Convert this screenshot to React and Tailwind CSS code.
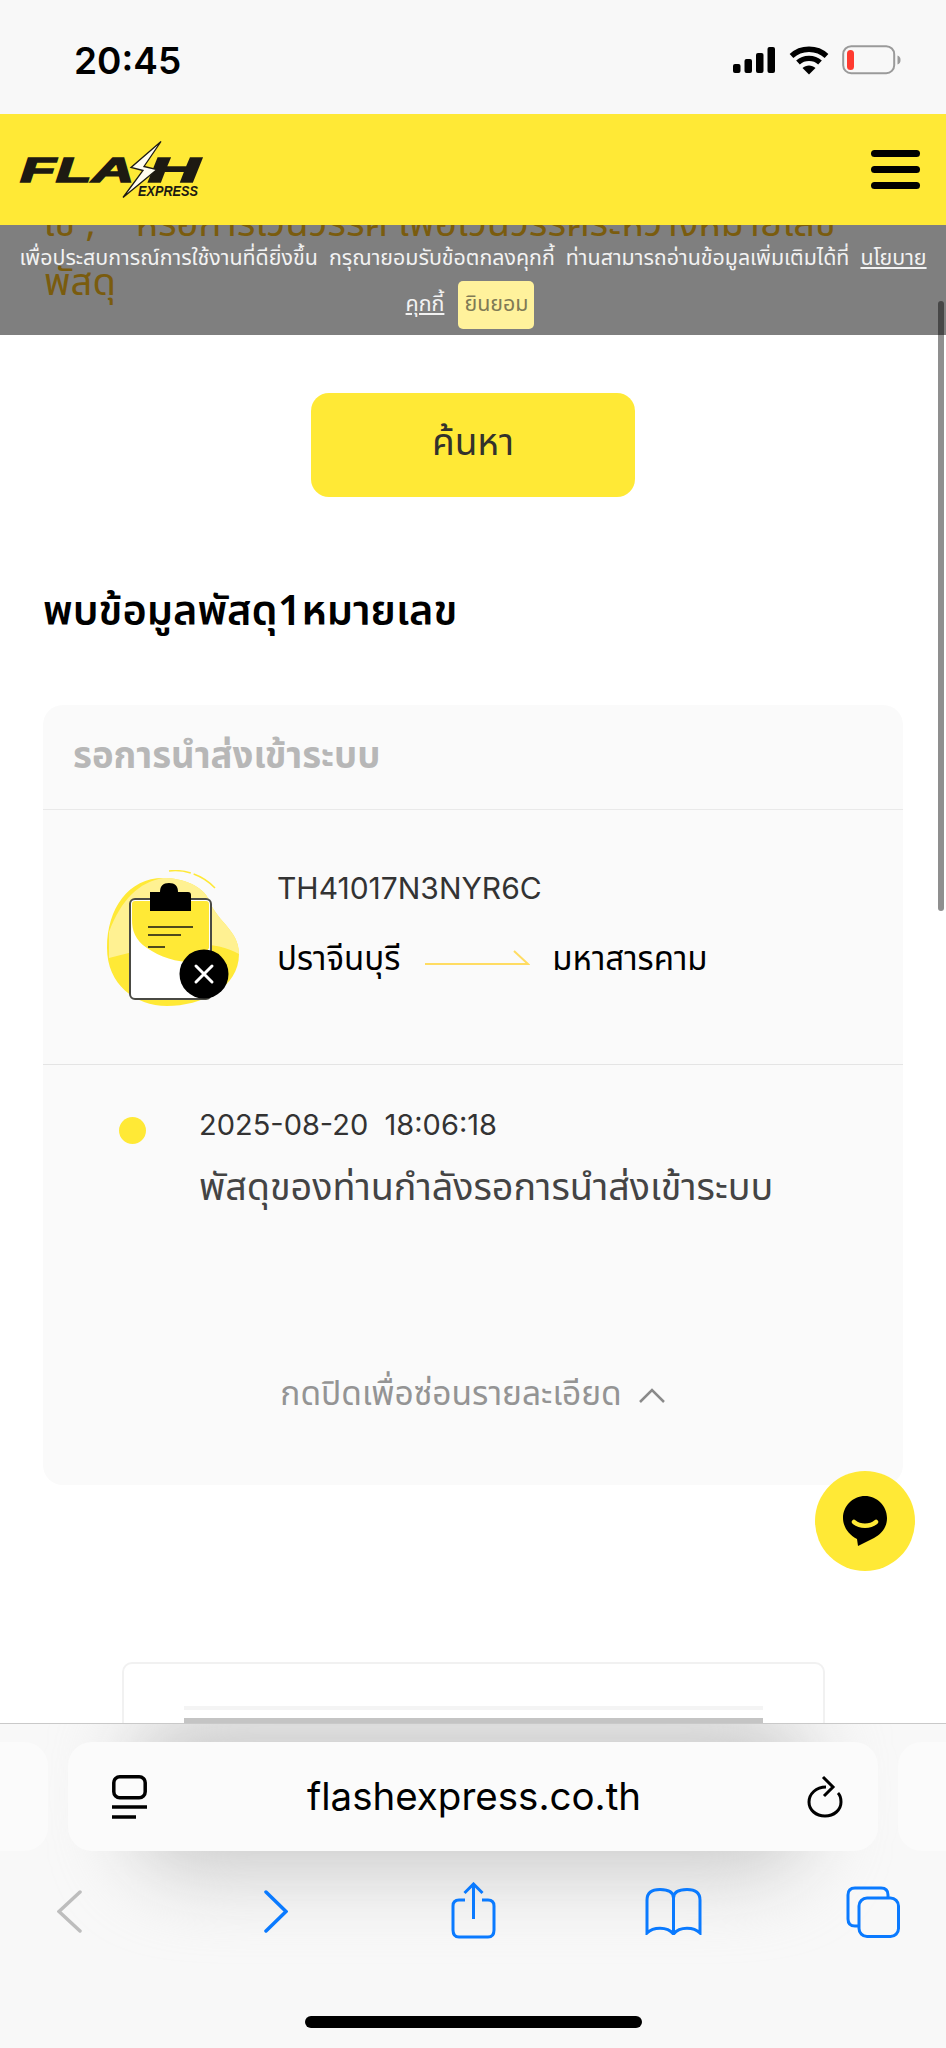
import React from "react";

const thai = "font-['Noto_Sans_Thai','Noto_Sans_Thai_Looped','Noto_Sans','DejaVu_Sans','Liberation_Sans',sans-serif]";

function Signal() {
  return (
    <svg width="43" height="26" viewBox="0 0 43 26" fill="black">
      <rect x="0" y="17" width="7.500" height="9" rx="2" />
      <rect x="11.500" y="12" width="7.500" height="14" rx="2" />
      <rect x="23" y="6" width="7.500" height="20" rx="2" />
      <rect x="34.500" y="0" width="7.500" height="26" rx="2" />
    </svg>
  );
}

function Wifi() {
  return (
    <svg width="40" height="30" viewBox="0 0 40 30" fill="none" stroke="black" strokeWidth="5.400">
      <path d="M2.500 11C12 2 28 2 37.500 11" />
      <path d="M9 17.500C15 12 25 12 31 17.500" />
      <path d="M20 29.500L13.500 23C17 19.500 23 19.500 26.500 23Z" fill="black" stroke="none" />
    </svg>
  );
}

function Battery() {
  return (
    <svg width="60" height="30" viewBox="0 0 60 30" fill="none">
      <rect x="1.200" y="1.200" width="51" height="27" rx="8" stroke="#9a9a9a" strokeWidth="2" />
      <rect x="5" y="5" width="7" height="20" rx="3.500" fill="#ff3b30" />
      <path d="M55.500 10.500C58 11.500 58.500 13 58.500 15C58.500 17 58 18.500 55.500 19.500Z" fill="#9a9a9a" />
    </svg>
  );
}

function Logo() {
  return (
    <svg width="204" height="64" viewBox="0 0 204 64">
      <text x="18" y="43.500" fontFamily="Liberation Sans" fontWeight="700" fontStyle="italic" fontSize="35" textLength="114" lengthAdjust="spacingAndGlyphs" fill="#1d1a12" stroke="#1d1a12" strokeWidth="1.500">FLA</text>
      <text x="146" y="43.500" fontFamily="Liberation Sans" fontWeight="700" fontStyle="italic" fontSize="35" textLength="52" lengthAdjust="spacingAndGlyphs" fill="#1d1a12" stroke="#1d1a12" strokeWidth="1.500">H</text>
      <path d="M159 3.500L129 29.500L141 32.500L121 59.500L155 31.500L142 28.500Z" fill="#fffdf0" stroke="#1d1a12" strokeWidth="1.300" strokeLinejoin="miter" />
      <text x="136" y="57.500" fontFamily="Liberation Sans" fontWeight="700" fontStyle="italic" fontSize="15" textLength="60" lengthAdjust="spacingAndGlyphs" fill="#1d1a12">EXPRESS</text>
    </svg>
  );
}

function Clipboard() {
  return (
    <svg width="136" height="140" viewBox="0 0 136 140" className="block">
      <path d="M58 8C24 8 2 38 2 78C2 114 30 136 62 136C96 136 134 118 134 84C134 60 112 52 104 30C98 16 78 8 58 8Z" fill="#ffe936" />
      <path d="M4 62C16 30 34 12 58 8C78 8 98 16 104 30C112 52 134 60 134 84C110 70 70 70 4 88Z" fill="#fff29c" opacity="0.900" />
      <path d="M64 1C80 -1 98 5 110 18" fill="none" stroke="#ffe936" strokeWidth="1.500" strokeDasharray="22 3 30" />
      <rect x="25" y="29" width="81" height="100" rx="5" fill="#ffffff" stroke="#4a4a44" strokeWidth="2" />
      <path d="M27 34Q27 31 30 31H101Q104 31 104 34V78L94 92C78 94 56 88 42 78C30 70 27 60 27 50Z" fill="#ffe936" />
      <path d="M45 22H55C55 16 58 13 64 13C70 13 73 16 73 22H83Q86 22 86 25V41H45Z" fill="#000" />
      <path d="M43 57H88M43 65H76M43 77H60" stroke="#4f4a1c" strokeWidth="2" />
      <circle cx="99" cy="104" r="24.500" fill="#000" />
      <path d="M91 96L107 112M107 96L91 112" stroke="#fff" strokeWidth="3" strokeLinecap="round" />
    </svg>
  );
}

function Chat() {
  return (
    <svg width="46" height="52" viewBox="0 0 46 52">
      <path d="M23 1C35 1 45 11 45 23C45 33 39 39 32 43L16 51L15 44C7 40 1 32 1 23C1 11 11 1 23 1Z" fill="#000" />
      <path d="M12 27C18 32 28 32 34 27" fill="none" stroke="#ffe936" strokeWidth="4.500" strokeLinecap="round" />
    </svg>
  );
}

const blue = "#0a7aff";

export default function App() {
  return (
    <div className={`relative flex flex-col w-[946px] h-[2048px] overflow-hidden bg-white ${thai}`}>
      <div className="relative z-20 flex items-center justify-between h-[114px] shrink-0 bg-[#f8f8f8] pl-[74px] pr-[44px] pt-[6px]">
        <span className="font-['Inter',sans-serif] text-[37px] font-semibold text-black leading-none">20:45</span>
        <div className="flex items-center gap-[13px]">
          <Signal />
          <Wifi />
          <Battery />
        </div>
      </div>

      <header className="relative z-20 flex items-center justify-between h-[111px] shrink-0 bg-[#ffe936] pl-[2px] pr-[26px]">
        <Logo />
        <div className="flex flex-col gap-[9px]">
          <div className="w-[49px] h-[7px] rounded-full bg-black" />
          <div className="w-[49px] h-[7px] rounded-full bg-black" />
          <div className="w-[49px] h-[7px] rounded-full bg-black" />
        </div>
      </header>

      <main className="relative flex-1 min-h-0 overflow-hidden">
        <div className="mt-[-30px] px-[44px] text-[38.200px] leading-[59px] whitespace-nowrap text-[#f5b81c]">
          <p>ใช้ ,&nbsp;&nbsp;&nbsp;&nbsp;หรือการเว้นวรรค เพื่อเว้นวรรคระหว่างหมายเลข</p>
          <p>พัสดุ</p>
        </div>

        <button className="block mt-[80px] ml-[311px] w-[324px] h-[104px] rounded-[18px] bg-[#ffe936] text-[37px] text-[#33322c]">ค้นหา</button>

        <h2 className="mt-[91px] pl-[43px] text-[41.500px] font-semibold leading-[50px] text-black">พบข้อมูลพัสดุ1หมายเลข</h2>

        <section className="mx-[43px] mt-[67px] h-[780px] rounded-[20px] bg-[#fafafa]">
          <div className="flex items-center h-[105px] border-b border-[#e9e9e9] pl-[30px] text-[36.500px] font-bold text-[#b7b7b7]">รอการนำส่งเข้าระบบ</div>

          <div className="flex h-[255px] border-b border-[#e4e4e4] pl-[62px] pt-[60px]">
            <Clipboard />
            <div className="ml-[36px] -mt-[2px]">
              <div className="font-['Inter',sans-serif] text-[30px] leading-[40px] text-[#333]">TH41017N3NYR6C</div>
              <div className="mt-[34px] flex items-center text-[33px] leading-[36px] text-black">
                <span>ปราจีนบุรี</span>
                <svg width="106" height="22" viewBox="0 0 106 22" className="ml-[24px] mr-[22px]" fill="none" stroke="#ffdc62" strokeWidth="2">
                  <path d="M1 15H104L90 2" />
                </svg>
                <span>มหาสารคาม</span>
              </div>
            </div>
          </div>

          <div className="relative pl-[156px] pt-[42px]">
            <div className="absolute left-[76px] top-[52px] w-[27px] h-[27px] rounded-full bg-[#ffe936]" />
            <div className="font-['Inter',sans-serif] text-[29px] leading-[36px] text-[#333]">2025-08-20&nbsp;&nbsp;18:06:18</div>
            <div className="mt-[25px] text-[37.700px] leading-[42px] text-[#444]">พัสดุของท่านกำลังรอการนำส่งเข้าระบบ</div>
          </div>

          <div className="mt-[167px] flex items-center justify-center gap-[16px] text-[33.500px] leading-[36px] text-[#949494]">
            <span>กดปิดเพื่อซ่อนรายละเอียด</span>
            <svg width="28" height="16" viewBox="0 0 28 16" fill="none" stroke="#8a8a8a" strokeWidth="2.500"><path d="M2 15L14 3L26 15" /></svg>
          </div>
        </section>

        <div className="mt-[177px] ml-[122px] w-[703px] h-[200px] rounded-[10px] border-2 border-[#f1f1f1] bg-white">
          <div className="mx-[60px] mt-[42px] h-[4px] bg-[#f4f4f4]" />
          <div className="mx-[60px] mt-[8px] h-[6px] bg-[#c4c4c4]" />
        </div>

        <div className="absolute left-[815px] top-[1246px] flex items-center justify-center w-[100px] h-[100px] rounded-full bg-[#ffe936]">
          <Chat />
        </div>

        <div className="absolute right-[2px] top-[76px] w-[6px] h-[610px] rounded-full bg-[#8f8f8f]" />
      </main>

      <div className="absolute left-0 right-0 top-[225px] z-10 h-[110px] bg-[rgba(0,0,0,0.5)] pt-[14px] text-center text-[21.400px] leading-[40px] text-[#f2f2f2]">
        <p className="whitespace-nowrap">เพื่อประสบการณ์การใช้งานที่ดียิ่งขึ้น&nbsp;&nbsp;กรุณายอมรับข้อตกลงคุกกี้&nbsp;&nbsp;ท่านสามารถอ่านข้อมูลเพิ่มเติมได้ที่&nbsp;&nbsp;<span className="underline">นโยบาย</span></p>
        <div className="mt-[2px] flex items-center justify-center gap-[14px] pr-[6px]">
          <span className="underline">คุกกี้</span>
          <span className="flex items-center justify-center w-[76px] h-[48px] rounded-[5px] bg-[#fff29c] text-[#807a55]">ยินยอม</span>
        </div>
      </div>

      <div className="relative z-20 h-[325px] shrink-0 overflow-hidden border-t border-[#c9c9c9] bg-[#f8f8f8]">
        <div className="absolute left-[130px] top-[-10px] w-[680px] h-[160px] rounded-[60px] bg-[#cccccc] blur-[38px]" />
        <div className="relative mt-[18px] flex gap-[20px] -ml-[674px]">
          <div className="w-[722px] h-[109px] shrink-0 rounded-[24px] bg-[#fbfbfb]" />
          <div className="flex items-center justify-between w-[810px] h-[109px] shrink-0 rounded-[24px] bg-[#fbfbfb] pl-[44px] pr-[35px]">
            <svg width="35" height="44" viewBox="0 0 35 44" fill="none" stroke="#000" strokeWidth="3.500">
              <rect x="1.800" y="1.800" width="31.400" height="21" rx="6" />
              <path d="M0 32H35" />
              <path d="M0 42H24" />
            </svg>
            <span className="-ml-[6px] font-['Inter',sans-serif] text-[38.500px] text-black leading-none">flashexpress.co.th</span>
            <svg width="36" height="43" viewBox="0 0 36 43" fill="none" stroke="#000" strokeWidth="3">
              <path d="M19 12C9 12 2 19 2 27C2 35 9 41 18 41C27 41 34 35 34 27C34 23 33 20 31 18" />
              <path d="M16 2L26 12L17 21" />
            </svg>
          </div>
          <div className="w-[300px] h-[109px] shrink-0 rounded-[24px] bg-[#fbfbfb]" />
        </div>

        <div className="relative mt-[31px] flex items-start pl-[57px]">
          <svg width="25" height="43" viewBox="0 0 25 43" fill="none" stroke="#bdbdbd" strokeWidth="3.500" strokeLinecap="round" className="mt-[8px] shrink-0"><path d="M23 2L2 21.500L23 41" /></svg>
          <svg width="24" height="43" viewBox="0 0 24 43" fill="none" stroke={blue} strokeWidth="3.500" strokeLinecap="round" className="mt-[8px] ml-[182px] shrink-0"><path d="M2 2L22 21.500L2 41" /></svg>
          <svg width="45" height="57" viewBox="0 0 45 57" fill="none" stroke={blue} strokeWidth="3" className="ml-[163px] shrink-0">
            <path d="M14 18H8Q2 18 2 24V48Q2 55 8 55H37Q43 55 43 48V24Q43 18 37 18H31" />
            <path d="M22.500 37V2M13.500 11L22.500 2L31.500 11" />
          </svg>
          <svg width="57" height="47" viewBox="0 0 57 47" fill="none" stroke={blue} strokeWidth="3" className="mt-[6px] ml-[149px] shrink-0">
            <path d="M28.500 10C28.500 4 23 1.500 15 1.500C7 1.500 2 5 2 12V45C8 39 22 38 28.500 46C35 38 49 39 55 45V12C55 5 50 1.500 42 1.500C34 1.500 28.500 4 28.500 10V46" />
          </svg>
          <svg width="54" height="52" viewBox="0 0 54 52" fill="none" stroke={blue} strokeWidth="3" className="mt-[4px] ml-[144px] shrink-0">
            <path d="M42 11V9Q42 2 35 2H9Q2 2 2 9V33Q2 40 9 40H12" />
            <rect x="13" y="12" width="39.500" height="38.500" rx="8" />
          </svg>
        </div>

        <div className="absolute left-[305px] top-[292px] w-[337px] h-[12px] rounded-full bg-black" />
      </div>
    </div>
  );
}
